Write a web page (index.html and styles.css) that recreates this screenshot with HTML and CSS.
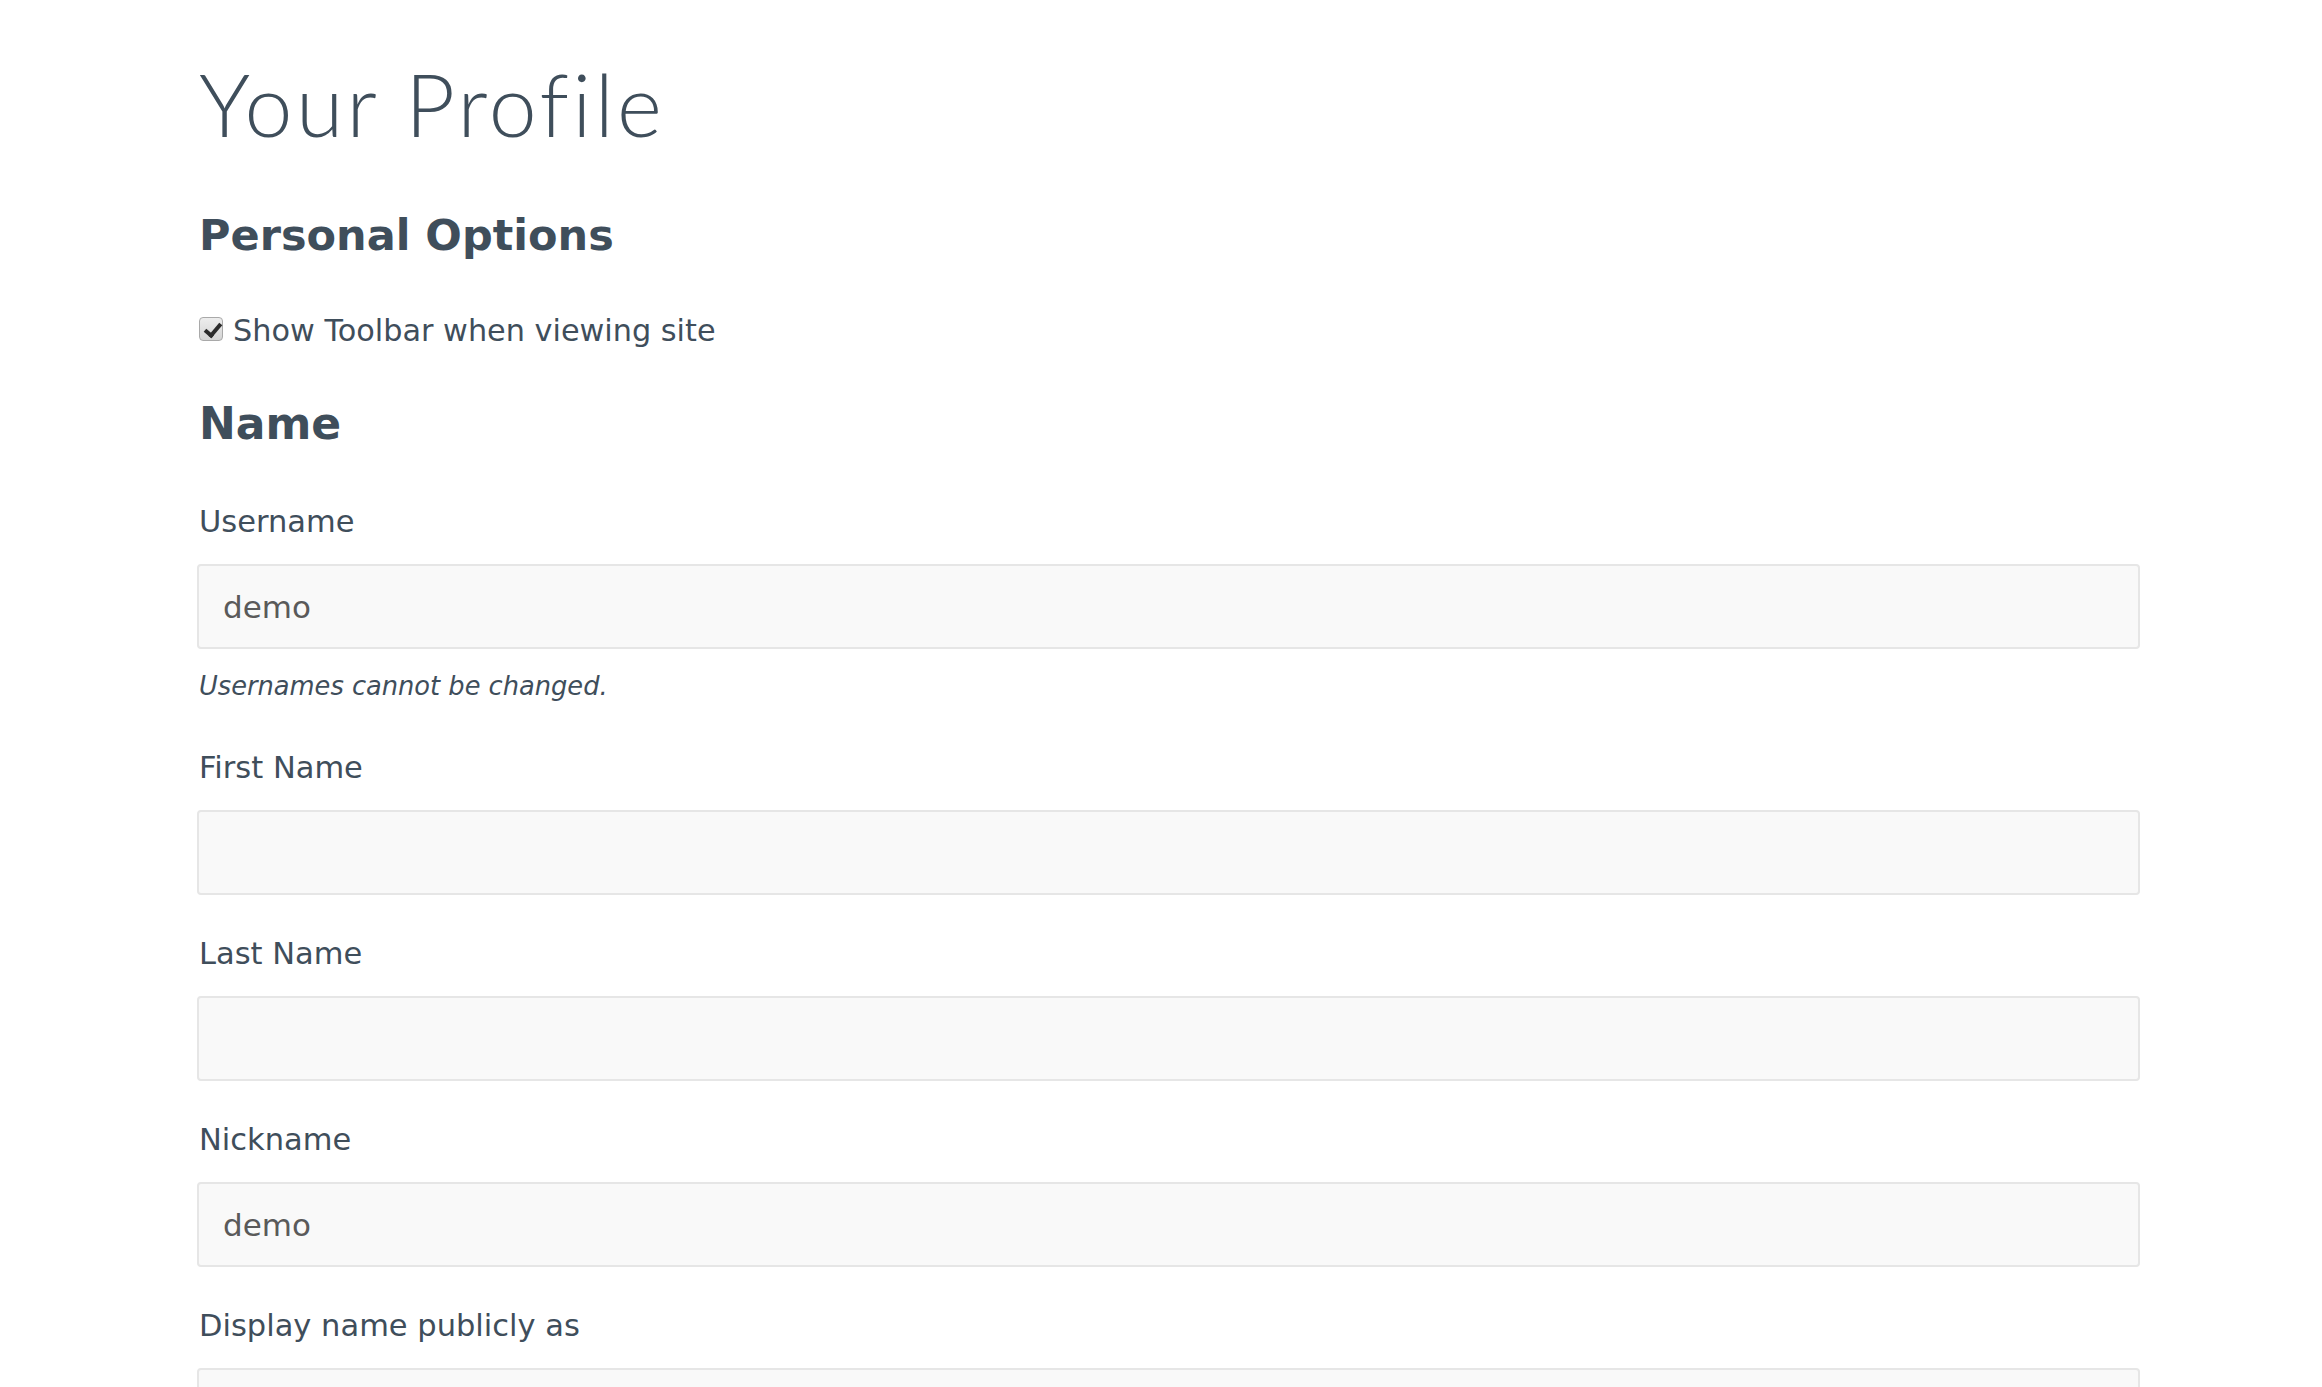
FILE: index.html
```html
<!DOCTYPE html>
<html lang="en">

<head>
    <meta charset="UTF-8" />
    <meta name="viewport" content="width=device-width, initial-scale=1.0">
    <title>Your Profile</title>
    <link rel="stylesheet" href="styles.css">
</head>

<body>
    <div class="profile">
        <h1 class="page-title">Your Profile</h1>

        <h2 class="section-title">Personal Options</h2>
        <label class="check-row">
            <input type="checkbox" class="check" checked />
            <span>Show Toolbar when viewing site</span>
        </label>

        <h2 class="section-title name-title">Name</h2>

        <div class="field">
            <label class="field-label" for="username">Username</label>
            <input type="text" class="field-input" id="username" value="demo" disabled />
            <p class="hint">Usernames cannot be changed.</p>
        </div>

        <div class="field">
            <label class="field-label" for="firstName">First Name</label>
            <input type="text" class="field-input" id="firstName" />
        </div>

        <div class="field">
            <label class="field-label" for="lastName">Last Name</label>
            <input type="text" class="field-input" id="lastName" />
        </div>

        <div class="field">
            <label class="field-label" for="nickname">Nickname</label>
            <input type="text" class="field-input" id="nickname" value="demo" />
        </div>

        <div class="field">
            <label class="field-label" for="displayName">Display name publicly as</label>
            <input type="text" class="field-input" id="displayName" />
        </div>
    </div>
</body>

</html>
```

FILE: styles.css
```css
* {
    box-sizing: border-box;
}

body {
    margin: 0;
    font-family: 'DejaVu Sans', Lato, sans-serif;
    color: #3f4e5b;
    background-color: #fff;
}

.profile {
    width: 1943px;
    margin-left: 197px;
    padding-top: 54px;
}

.page-title {
    font-family: Lato, 'Open Sans', sans-serif;
    font-size: 86px;
    font-weight: 300;
    letter-spacing: 3.4px;
    line-height: 100px;
    margin: 0 0 50px 0;
    padding-left: 2px;
}

.section-title {
    font-size: 43px;
    font-weight: 700;
    line-height: 56px;
    margin: 0 0 50px 0;
    padding: 3px 0 0 2px;
}

.name-title {
    font-size: 44px;
    margin-bottom: 51px;
}

.check-row {
    display: flex;
    align-items: center;
    gap: 10px;
    font-size: 30.3px;
    line-height: 36px;
    margin-bottom: 44px;
    padding-left: 2px;
}

.check {
    appearance: none;
    -webkit-appearance: none;
    flex-shrink: 0;
    width: 24px;
    height: 24px;
    margin: 0;
    border: 1px solid #a9a9a9;
    border-radius: 4px;
    background: linear-gradient(#ededed, #d4d4d4);
    position: relative;
    top: -2px;
}

.check:checked::after {
    content: '';
    position: absolute;
    left: 8px;
    top: 2px;
    width: 6px;
    height: 13px;
    border: solid #2b2b2b;
    border-width: 0 4px 4px 0;
    transform: rotate(40deg);
}

.field {
    margin-bottom: 40px;
}

.field-label {
    display: block;
    font-size: 30.5px;
    line-height: 36px;
    margin-bottom: 24px;
    padding: 1px 0 0 2px;
}

.field-input {
    display: block;
    width: 100%;
    height: 85px;
    padding: 0 24px;
    border: 2px solid #e6e6e6;
    border-radius: 4px;
    background-color: #f9f9f9;
    font-family: inherit;
    font-size: 31px;
    color: #5a5a5a;
    outline: none;
}

.hint {
    font-size: 25.7px;
    font-style: italic;
    line-height: 32px;
    margin: 21px 0 -32px 0;
    padding-left: 2px;
}

.field:has(.hint) {
    margin-bottom: 79px;
}
```
